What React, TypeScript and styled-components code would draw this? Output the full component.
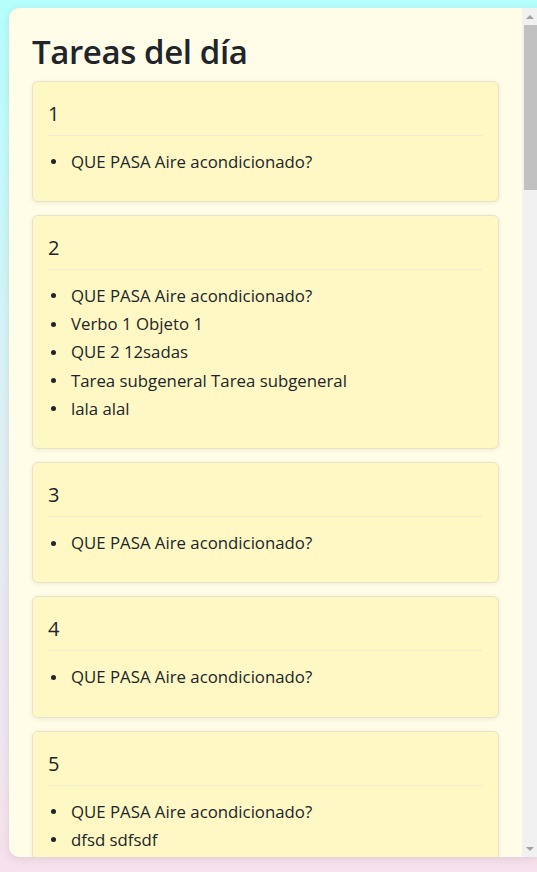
import React from "react";
import styled, { createGlobalStyle } from "styled-components";

const GlobalStyle = createGlobalStyle`
  html, body { margin: 0; padding: 0; }
  body {
    min-height: 100vh;
    background: linear-gradient(to bottom, #b4fffd 0%, #dff0f4 50%, #f7e1ec 100%);
    font-family: "Open Sans", "Noto Sans", sans-serif;
    color: #212529;
    overflow: hidden;
  }
`;

const Panel = styled.main`
  box-sizing: border-box;
  margin: 8px 0 0 9px;
  width: calc(100vw - 9px);
  height: 849px;
  display: flex;
  background: #fffce8;
  border-radius: 10px 0 0 10px;
  box-shadow: 0 2px 8px rgba(120, 80, 100, 0.15);
  overflow: hidden;
`;

const Scroller = styled.div`
  flex: 1;
  min-width: 0;
  padding: 24px 23px 24px 23px;
  overflow-y: auto;
  scrollbar-width: none;
  &::-webkit-scrollbar { display: none; }
`;

const ScrollBar = styled.div`
  width: 15px;
  flex: none;
  display: flex;
  flex-direction: column;
  background: #f1f1f1;
`;

const ScrollButton = styled.div`
  height: 17px;
  flex: none;
  display: flex;
  align-items: center;
  justify-content: center;
  padding-left: 1px;
`;

const ScrollTrack = styled.div`
  flex: 1;
  display: flex;
  flex-direction: column;
  padding-left: 2px;
`;

const ScrollThumb = styled.div`
  height: 165px;
  background: #c1c1c1;
`;

const Title = styled.h1`
  margin: 0 0 9px 0;
  font-size: 33px;
  font-weight: 600;
  letter-spacing: -0.4px;
  line-height: 1.2;
`;

const CardList = styled.div`
  display: flex;
  flex-direction: column;
  gap: 13px;
`;

const Card = styled.section`
  background: #fff8c4;
  border: 1px solid #e8e3c8;
  border-radius: 6px;
  box-shadow: 0 1px 4px rgba(150, 140, 90, 0.15);
  padding: 20px 15px 9px 15px;
`;

const CardHeader = styled.h2`
  margin: 0;
  padding-bottom: 9px;
  border-bottom: 1px solid #f1ecd6;
  font-size: 20px;
  font-weight: 400;
  line-height: 24px;
`;

const TaskList = styled.ul`
  margin: 12px 0 16px 0;
  padding: 0;
  list-style: none;
`;

const Task = styled.li`
  display: flex;
  align-items: center;
  font-size: 16.8px;
  line-height: 28.25px;
  &::before {
    content: "";
    flex: none;
    width: 5px;
    height: 5px;
    border-radius: 50%;
    background: #212529;
    margin: 0 15px 0 3px;
  }
`;

const days: { day: number; tasks: string[] }[] = [
  { day: 1, tasks: ["QUE PASA Aire acondicionado?"] },
  {
    day: 2,
    tasks: [
      "QUE PASA Aire acondicionado?",
      "Verbo 1 Objeto 1",
      "QUE 2 12sadas",
      "Tarea subgeneral Tarea subgeneral",
      "lala alal",
    ],
  },
  { day: 3, tasks: ["QUE PASA Aire acondicionado?"] },
  { day: 4, tasks: ["QUE PASA Aire acondicionado?"] },
  { day: 5, tasks: ["QUE PASA Aire acondicionado?", "dfsd sdfsdf"] },
  ...Array.from({ length: 25 }, (_, i) => ({
    day: i + 6,
    tasks: ["QUE PASA Aire acondicionado?"],
  })),
];

const Arrow = ({ up }: { up?: boolean }) => (
  <svg width="8" height="4" viewBox="0 0 8 4">
    <path d={up ? "M0 4 L4 0 L8 4 Z" : "M0 0 L8 0 L4 4 Z"} fill="#a3a3a3" />
  </svg>
);

export default function App() {
  return (
    <>
      <GlobalStyle />
      <Panel>
        <Scroller>
          <Title>Tareas del día</Title>
          <CardList>
            {days.map((d) => (
              <Card key={d.day}>
                <CardHeader>{d.day}</CardHeader>
                <TaskList>
                  {d.tasks.map((t, i) => (
                    <Task key={i}>{t}</Task>
                  ))}
                </TaskList>
              </Card>
            ))}
          </CardList>
        </Scroller>
        <ScrollBar aria-hidden>
          <ScrollButton>
            <Arrow up />
          </ScrollButton>
          <ScrollTrack>
            <ScrollThumb />
          </ScrollTrack>
          <ScrollButton>
            <Arrow />
          </ScrollButton>
        </ScrollBar>
      </Panel>
    </>
  );
}
